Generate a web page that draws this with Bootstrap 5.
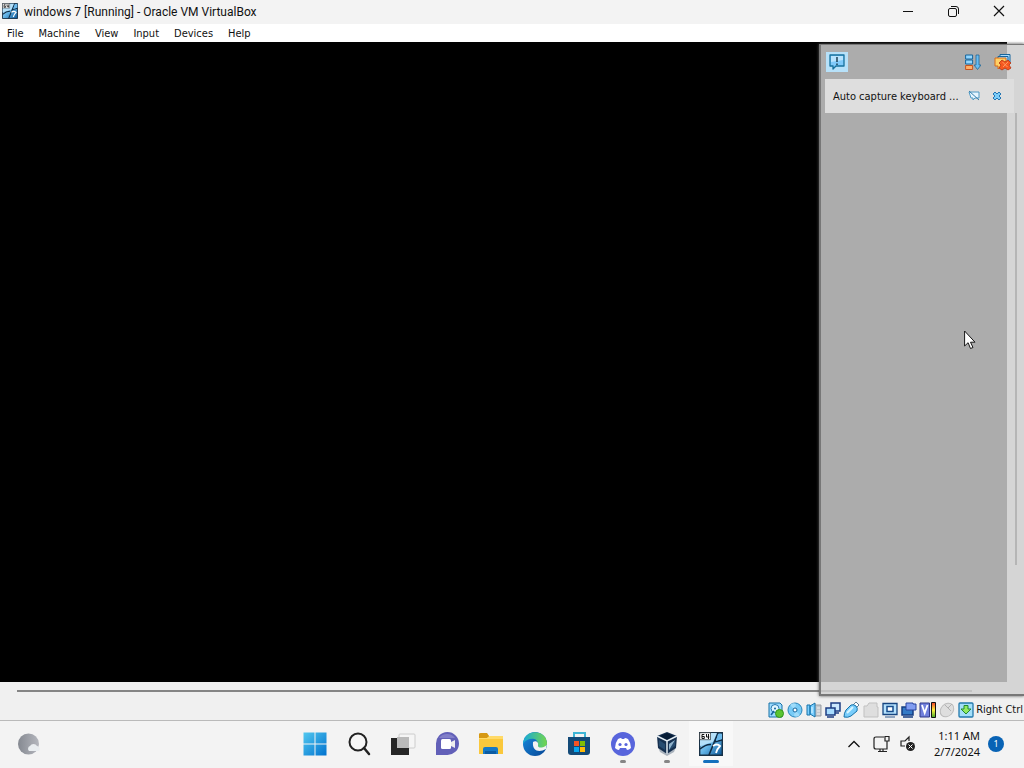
<!DOCTYPE html>
<html lang="en">
<head>
<meta charset="utf-8">
<meta name="viewport" content="width=device-width, initial-scale=1">
<title>windows 7 [Running] - Oracle VM VirtualBox</title>
<link href="https://cdn.jsdelivr.net/npm/bootstrap@5.3.0/dist/css/bootstrap.min.css" rel="stylesheet">
<script src="https://cdn.jsdelivr.net/npm/bootstrap@5.3.0/dist/js/bootstrap.bundle.min.js"></script>
<style>
body{font-family:"DejaVu Sans Condensed","Noto Sans",sans-serif;font-size:11px;line-height:18px;color:#111;background:#f0f0f0}
svg{display:block;flex:none}
button{border:0;background:none;padding:0;color:inherit;display:flex;align-items:center;justify-content:center}
.titlebar{height:24px;background:#f3f3f3;font-family:Roboto,"Noto Sans",sans-serif;font-size:12px;padding:0 3px 2px 2px}
.titlebar .app-name{padding:2px 0 0 6px}
.titlebar .caption-btn{width:45px;height:22px}
.menubar{height:18px;background:#fff;gap:15px;padding:1px 0 0 7px}
.menubar a{color:#111;text-decoration:none}
.guest{background:#000;margin-right:17px}
.hscroll{height:16px;padding:8px 52px 0 17px}
.hscroll div{height:2px;background:#858585}
.notices{position:absolute;top:2px;right:0;bottom:2px;width:205px;background:rgba(207,207,207,.83);border:solid #777;border-width:1px 0 2px 2px;box-shadow:0 0 3px #555}
.notices .tools{height:34px;padding:0 12px 0 5px}
.notices .tool-gap{margin-right:13px}
.bubble-btn{width:22px;height:20px;background:#b7e1f9}
.notice{height:34px;margin:0 10px 0 4px;padding:0 12px 0 8px;background:#dedede;color:#111}
.notice span{padding-top:2px}
.vscroll{position:absolute;right:7px;top:68px;width:2px;height:452px;background:#b5b5b5}
.pointer{position:absolute;right:48px;top:288px}
.statusbar{height:23px;border-bottom:1px solid #bababa;padding:1px 1px 0 0}
.statusbar button{width:19px;height:20px}
.statusbar .host-key{padding:1px 0 0 1px;white-space:nowrap}
.taskbar{height:47px;background:#f3f3f3;font-family:"Noto Sans",sans-serif;padding:0 0 2px 1px}
.taskbar .side{flex:1 1 0}
.taskbar .app{width:44px;height:45px;position:relative}
.run::after{content:"";position:absolute;bottom:3px;width:6px;height:3px;border-radius:2px;background:#858585}
.run.active::after{width:16px;background:#1470bd}
.run.active{background:#f8f8f8}
.clock{line-height:16px;text-align:right;width:56px}
.count{width:16px;height:16px;border-radius:50%;background:#0863b5;color:#fff;font-size:9px;line-height:16px}
</style>
</head>
<body>
<div class="d-flex flex-column vh-100 overflow-hidden">
<header class="titlebar d-flex align-items-center">
  <svg width="16" height="16" viewBox="0 0 24 24"><use href="#vm7"/></svg>
  <span class="app-name flex-grow-1">windows 7 [Running] - Oracle VM VirtualBox</span>
  <button class="caption-btn" aria-label="Minimize"><svg width="11" height="11"><path d="M0 5.500h10" stroke="#111"/></svg></button>
  <button class="caption-btn" aria-label="Restore"><svg width="11" height="11" fill="none" stroke="#111"><rect x=".5" y="2.500" width="8" height="8" rx="1.500"/><path d="M3 .5h5q2.500 0 2.500 2.500v5"/></svg></button>
  <button class="caption-btn" aria-label="Close"><svg width="12" height="12"><path d="M1 1l10 10M11 1L1 11" stroke="#111" stroke-width="1.200"/></svg></button>
</header>
<nav class="menubar d-flex align-items-center" aria-label="Menu"><a href="#">File</a><a href="#">Machine</a><a href="#">View</a><a href="#">Input</a><a href="#">Devices</a><a href="#">Help</a></nav>

<main class="flex-grow-1 position-relative d-flex flex-column">
  <div class="guest flex-grow-1"></div>
  <div class="hscroll"><div></div></div>
  <aside class="notices" aria-label="Notifications">
    <div class="tools d-flex align-items-center">
      <button class="bubble-btn me-auto" aria-label="Messages"><svg width="18" height="18" viewBox="0 0 18 18"><path d="M2 2h14v11H8l-3 3v-3H2z" fill="#80cafa" stroke="#17719d" stroke-width="1.300" stroke-linejoin="round"/><path d="M3 3h12v4L3 9z" fill="#b9e4fe"/><path d="M9 4v5M9 10.500v1.500" stroke="#08283b" stroke-width="1.300"/></svg></button>
      <button class="tool-gap" aria-label="Sort"><svg width="16" height="17" viewBox="0 0 16 17"><path d="M.6 1h7v4h-7zM.6 6h7v4h-7z" fill="#92d6ff" stroke="#16659b"/><path d="M.6 11.500h7v4h-7z" fill="#ffb168" stroke="#c7521f"/><path d="M11 1h3v10h2l-3.500 4.500L9 11h2z" fill="#68bdf3" stroke="#216694" stroke-width=".8"/></svg></button>
      <button aria-label="Clear all"><svg width="18" height="18" viewBox="0 0 18 18"><path d="M6 4V1.500h10v8h-2M4 6V3.500h10v7" fill="#a9dcff" stroke="#17659c"/><path d="M1 5h11v8H7l-3 3v-3H1z" fill="#ffd065" stroke="#d76a1a"/><path d="M8 7l3 2 3-2 3 3-2 2 2 3-3 2-3-2-3 2-3-2 2-3-2-2z" fill="#f75920" stroke="#b43412" stroke-width=".8"/><path d="M8.500 9l5 5M14 9l-5 5" stroke="#ff9a60"/></svg></button>
    </div>
    <div class="notice d-flex align-items-center"><span class="flex-grow-1 text-nowrap">Auto capture keyboard ...</span>
      <button class="me-2 pe-1" aria-label="Do not show again"><svg width="12" height="12" viewBox="0 0 12 12"><path d="M1 2h10v6H7l-2 2V8H3z" fill="#e5f5ff" stroke="#4e99c4"/><path d="M1 1l10 9" stroke="#377fab"/></svg></button>
      <button aria-label="Dismiss"><svg width="10" height="10" viewBox="0 0 10 10"><path d="M1 3l2-2 2 2 2-2 2 2-2 2 2 2-2 2-2-2-2 2-2-2 2-2z" fill="#7ccdfa" stroke="#2475b2"/></svg></button>
    </div>
    <div class="vscroll"></div>
  </aside>
  <svg class="pointer" width="12" height="20" viewBox="0 0 12 20"><path d="M.6 1v15l3.500-3.300L6.500 18.500l2.500-1-2.500-5.300H11z" fill="#fff" stroke="#151515"/></svg>
</main>

<footer class="statusbar d-flex align-items-center justify-content-end">
  <button aria-label="Hard disks"><svg width="16" height="16" viewBox="0 0 16 16"><path d="M1 1h11l2 2v12H1z" fill="#9ddcff" stroke="#1671a6"/><circle cx="7" cy="6.500" r="4" fill="#e1f6ff" stroke="#2878b0"/><circle cx="7" cy="6.500" r="1" fill="#16659b"/><path d="M3 13l3-4" stroke="#16659b" stroke-width="1.500"/><circle cx="11.500" cy="11.500" r="4" fill="#5bc430" stroke="#35941b"/></svg></button>
  <button aria-label="Optical drives"><svg width="16" height="16" viewBox="0 0 16 16"><circle cx="8" cy="8" r="7" fill="#78cbf6" stroke="#2784b9"/><path d="M8 8L3 3q3-3 6-1zM8 8l5 5q-3 3-6 1z" fill="#9fdcfa"/><circle cx="8" cy="8" r="2" fill="#fff" stroke="#16659b"/></svg></button>
  <button aria-label="Audio"><svg width="16" height="16" viewBox="0 0 16 16"><path d="M8 3h7v11H8z" fill="#c4c8cd" stroke="#9b9fa4"/><path d="M11 6h3M11 9h3M11 12h3" stroke="#eee"/><path d="M1 3h3v10H1zM4 4l5-3v14l-5-3z" fill="#7bcfff" stroke="#1772a9"/><path d="M6 5v6" stroke="#e5f8ff"/></svg></button>
  <button aria-label="Network"><svg width="16" height="16" viewBox="0 0 16 16"><path d="M6 1h9v8H6zM8 11h6" fill="#cbe8fe" stroke="#1c3d82" stroke-width="1.500"/><path d="M1 6h9v7H1zM2 15h7" fill="#a8dcff" stroke="#1c3d82" stroke-width="1.500"/></svg></button>
  <button aria-label="USB"><svg width="17" height="17" viewBox="0 0 17 17"><path d="M10 4l3-3 3 3-3 3z" fill="#fff" stroke="#668295"/><path d="M8 4q3-1 5 1t1 5l-6 5q-3 2-7 1 0-4 2-7z" fill="#78ccfa" stroke="#1472aa" stroke-linejoin="round"/><path d="M4 12l6-6" stroke="#d9f6ff" stroke-width="2"/></svg></button>
  <button aria-label="Shared folders"><svg width="16" height="16" viewBox="0 0 16 16"><path d="M1 4h3l2-3h8v4h1v10H1z" fill="#dedede" stroke="#c1c1c1"/></svg></button>
  <button aria-label="Display"><svg width="16" height="16" viewBox="0 0 16 16"><path d="M1 1.500h14v11H1z" fill="#b6e2fd" stroke="#174580" stroke-width="1.300"/><path d="M5 4.500h6v5H5z" fill="#fff" stroke="#174c8c" stroke-width="1.500"/><path d="M3 15h10" stroke="#315b90"/></svg></button>
  <button aria-label="Recording"><svg width="16" height="16" viewBox="0 0 16 16"><path d="M1 5h11v8H1zM2 15h10" fill="#347bc6" stroke="#143d81" stroke-width="1.500"/><path d="M5 1h7v1h3v6H5z" fill="#819df1" stroke="#28459e"/></svg></button>
  <button aria-label="Processor"><svg width="17" height="16" viewBox="0 0 17 16"><defs><linearGradient id="heat" x1="0" y1="0" x2="0" y2="1"><stop stop-color="#ef3927"/><stop offset=".5" stop-color="#fff33f"/><stop offset="1" stop-color="#40a52b"/></linearGradient></defs><path d="M1 1h9.500v14H1z" fill="#7180dc" stroke="#303887"/><path d="M3 3l2.700 8L8.500 3" fill="none" stroke="#fff" stroke-width="1.800"/><path d="M12.500.5h4v15h-4z" fill="url(#heat)" stroke="#111"/></svg></button>
  <button aria-label="Mouse integration"><svg width="16" height="16" viewBox="0 0 16 16"><ellipse cx="8" cy="8" rx="6" ry="7.500" transform="rotate(45 8 8)" fill="#dedede" stroke="#bbb"/><path d="M6 3l6 6M9 6l4-4" fill="none" stroke="#b2b2b2"/></svg></button>
  <button aria-label="Host key state"><svg width="16" height="16" viewBox="0 0 16 16"><rect x="1" y="1" width="14" height="14" rx="1" fill="#a4dff9" stroke="#2378ac" stroke-width="1.300"/><path d="M6 3.500h4V7h3l-5 5-5-5h3z" fill="#91ea5f" stroke="#218833"/></svg></button>
  <span class="host-key">Right Ctrl</span>
</footer>

<nav class="taskbar d-flex align-items-center" aria-label="Taskbar">
  <div class="side ps-3"><button aria-label="Weather"><svg width="24" height="24" viewBox="0 0 24 24"><defs><linearGradient id="moon"><stop stop-color="#858991"/><stop offset="1" stop-color="#b5b7be"/></linearGradient></defs><circle cx="11.500" cy="12" r="10.500" fill="url(#moon)"/><path d="M12 19a3 3 0 0 1 1-5 4 4 0 0 1 7 0 3 3 0 0 1 2 5z" fill="#e9edf0"/></svg></button></div>
  <div class="d-flex">
    <button class="app" aria-label="Start"><svg width="24" height="24" viewBox="0 0 24 24"><defs><linearGradient id="win" x2="1" y2="1"><stop stop-color="#52c8ef"/><stop offset="1" stop-color="#0072cf"/></linearGradient></defs><path d="M.5.5h11v11H.5zM12.500.5h11v11h-11zM.5 12.500h11v11H.5zM12.500 12.500h11v11h-11z" fill="url(#win)"/></svg></button>
    <button class="app" aria-label="Search"><svg width="24" height="24" viewBox="0 0 24 24"><circle cx="11" cy="10" r="8.500" fill="#f6f6f6" stroke="#222" stroke-width="2"/><path d="M17 16l5 6" stroke="#222" stroke-width="2.500" stroke-linecap="round"/></svg></button>
    <button class="app" aria-label="Task view"><svg width="26" height="24" viewBox="0 0 26 24"><rect x="9" y="2" width="16" height="14" rx="1" fill="#f5f5f5" stroke="#ccc"/><path d="M1 6h18v17H1z" fill="#262626"/><path d="M7 5h12v11H7z" fill="#bababa"/></svg></button>
    <button class="app" aria-label="Chat"><svg width="24" height="24" viewBox="0 0 24 24"><path d="M1 23V12A11.500 11.500 0 1 1 12 23z" fill="#6260b8"/><path d="M4 6a10 10 0 0 1 16 0z" fill="#827fc9"/><rect x="6" y="7" width="10" height="10" rx="1.500" fill="#fff"/><path d="M16 10l4-2v8l-4-2z" fill="#eee"/></svg></button>
    <button class="app" aria-label="File Explorer"><svg width="26" height="24" viewBox="0 0 26 24"><path d="M1 2h8l3 3h13v17H1z" fill="#fac83c"/><path d="M1 2q0-1 2-1h6l2 3-2 2H1z" fill="#d69813"/><path d="M1 6h8l3-2h13v3H1z" fill="#ffda68"/><path d="M5 22v-5q0-2 2-2h11q2 0 2 2v5z" fill="#1679c6"/><path d="M7 22v-3h11v3z" fill="#0b5ca3"/></svg></button>
    <button class="app" aria-label="Edge"><svg width="26" height="26" viewBox="0 0 26 26"><defs><linearGradient id="eg"><stop stop-color="#16a9d9"/><stop offset="1" stop-color="#73d64c"/></linearGradient><linearGradient id="eb" x2="1" y2="1"><stop stop-color="#188de0"/><stop offset="1" stop-color="#064594"/></linearGradient></defs><circle cx="13" cy="13" r="12" fill="url(#eb)"/><path d="M1 13C2-3 24-2 25 12c0 6-10 7-10 2 3-7-9-9-14-1z" fill="url(#eg)"/><path d="M11 11c-1 9 6 11 13 7l1-5c-1 4-10 5-9 1 1-2-2-5-5-3z" fill="#f3f3f3"/></svg></button>
    <button class="app" aria-label="Microsoft Store"><svg width="24" height="24" viewBox="0 0 24 24"><path d="M7 6V1h11v5" fill="none" stroke="#3eb5d6" stroke-width="2"/><path d="M1 5h22v15q0 3-3 3H4q-3 0-3-3z" fill="#134a78"/><path d="M7 9h5v5H7z" fill="#f35325"/><path d="M13 9h5v5h-5z" fill="#81bc06"/><path d="M7 15h5v5H7z" fill="#05a6f0"/><path d="M13 15h5v5h-5z" fill="#ffba08"/></svg></button>
    <button class="app run" aria-label="Discord"><svg width="26" height="26" viewBox="0 0 26 26"><circle cx="13" cy="13" r="12" fill="#5865dc"/><path d="M8 8q2-1 3-1l1 1h2l1-1q1 0 3 1 3 4 3 9-2 2-4 2l-1-2H10l-1 2q-2 0-4-2 0-5 3-9z" fill="#fff"/><circle cx="10" cy="13.500" r="1.600" fill="#5865dc"/><circle cx="16" cy="13.500" r="1.600" fill="#5865dc"/></svg></button>
    <button class="app run" aria-label="VirtualBox"><svg width="24" height="24" viewBox="0 0 24 24"><path d="M3 15l9 6 9-6-2 5-7 4-7-4z" fill="#aab3bd"/><path d="M12 0l10 4-1 12-9 6-9-6L2 4z" fill="#16304f"/><path d="M5 4l7-3 7 3-7 4z" fill="#061c36"/><path d="M2 4l10 5 10-5M12 9v13" fill="none" stroke="#e5edf3" stroke-width="1.500"/><path d="M4 8l6 4v6l-6-4zM20 8l-6 4v6l6-4z" fill="#274c70"/><path d="M20 8l-6 4v6z" fill="#91b4cd"/></svg></button>
    <button class="app run active" aria-label="windows 7"><svg width="24" height="24" viewBox="0 0 24 24"><defs><linearGradient id="sky" x2="1" y2="1"><stop stop-color="#d2edff"/><stop offset=".5" stop-color="#62b3e6"/><stop offset="1" stop-color="#075191"/></linearGradient>
    <g id="vm7"><path d="M.7.7h22.600v22.600H.7z" fill="url(#sky)" stroke="#193247" stroke-width="1.400"/><path d="M12 1h6l-4 9-13 4V8h11z" fill="#b5e0f9"/><path d="M1 17q6-5 11-4.500M19 1l-9 22M15 10l8-2" stroke="#102a42" stroke-width="1.600" fill="none"/><path d="M19 2h4v5l-6 2z" fill="#6cb9eb"/><path d="M14 14q4-3 7 0-3 3-4 7" fill="none" stroke="#fff" stroke-width="1.800"/><path d="M.7.700h10.800v7H.7z" fill="#f7f7f7" stroke="#222" stroke-width=".6"/><path d="M5.300 2.500H3v4h2.300v-2H3M7.500 2v3h2.800M9.500 2v5" fill="none" stroke="#111"/></g></defs><use href="#vm7"/></svg></button>
  </div>
  <div class="side d-flex align-items-center justify-content-end pe-3">
    <button aria-label="Hidden icons"><svg width="14" height="10"><path d="M1.500 8L7 2.500 12.500 8" fill="none" stroke="#111" stroke-width="1.300"/></svg></button>
    <button class="ms-2 ps-1" aria-label="Network"><svg width="18" height="18" fill="none" stroke="#222" stroke-width="1.200"><path d="M11 2H3q-2 0-2 2v8q0 2 2 2h11V9M5 16.500h9M7 14v2M10 14v2M12 1.500h4V6h-4zM14 6v7"/></svg></button>
    <button class="ms-2" aria-label="Volume muted"><svg width="17" height="17"><path d="M10 6V2L6 6H2v5h4" fill="none" stroke="#222" stroke-width="1.200"/><circle cx="11.500" cy="11.500" r="4.500" fill="#222"/><path d="M9.500 9.500l4 4M13.500 9.500l-4 4" stroke="#fff"/></svg></button>
    <div class="clock ms-2"><div>1:11 AM</div><div>2/7/2024</div></div>
    <button class="count ms-2 me-1" aria-label="Notifications">1</button>
  </div>
</nav>
</div>
</body>
</html>
